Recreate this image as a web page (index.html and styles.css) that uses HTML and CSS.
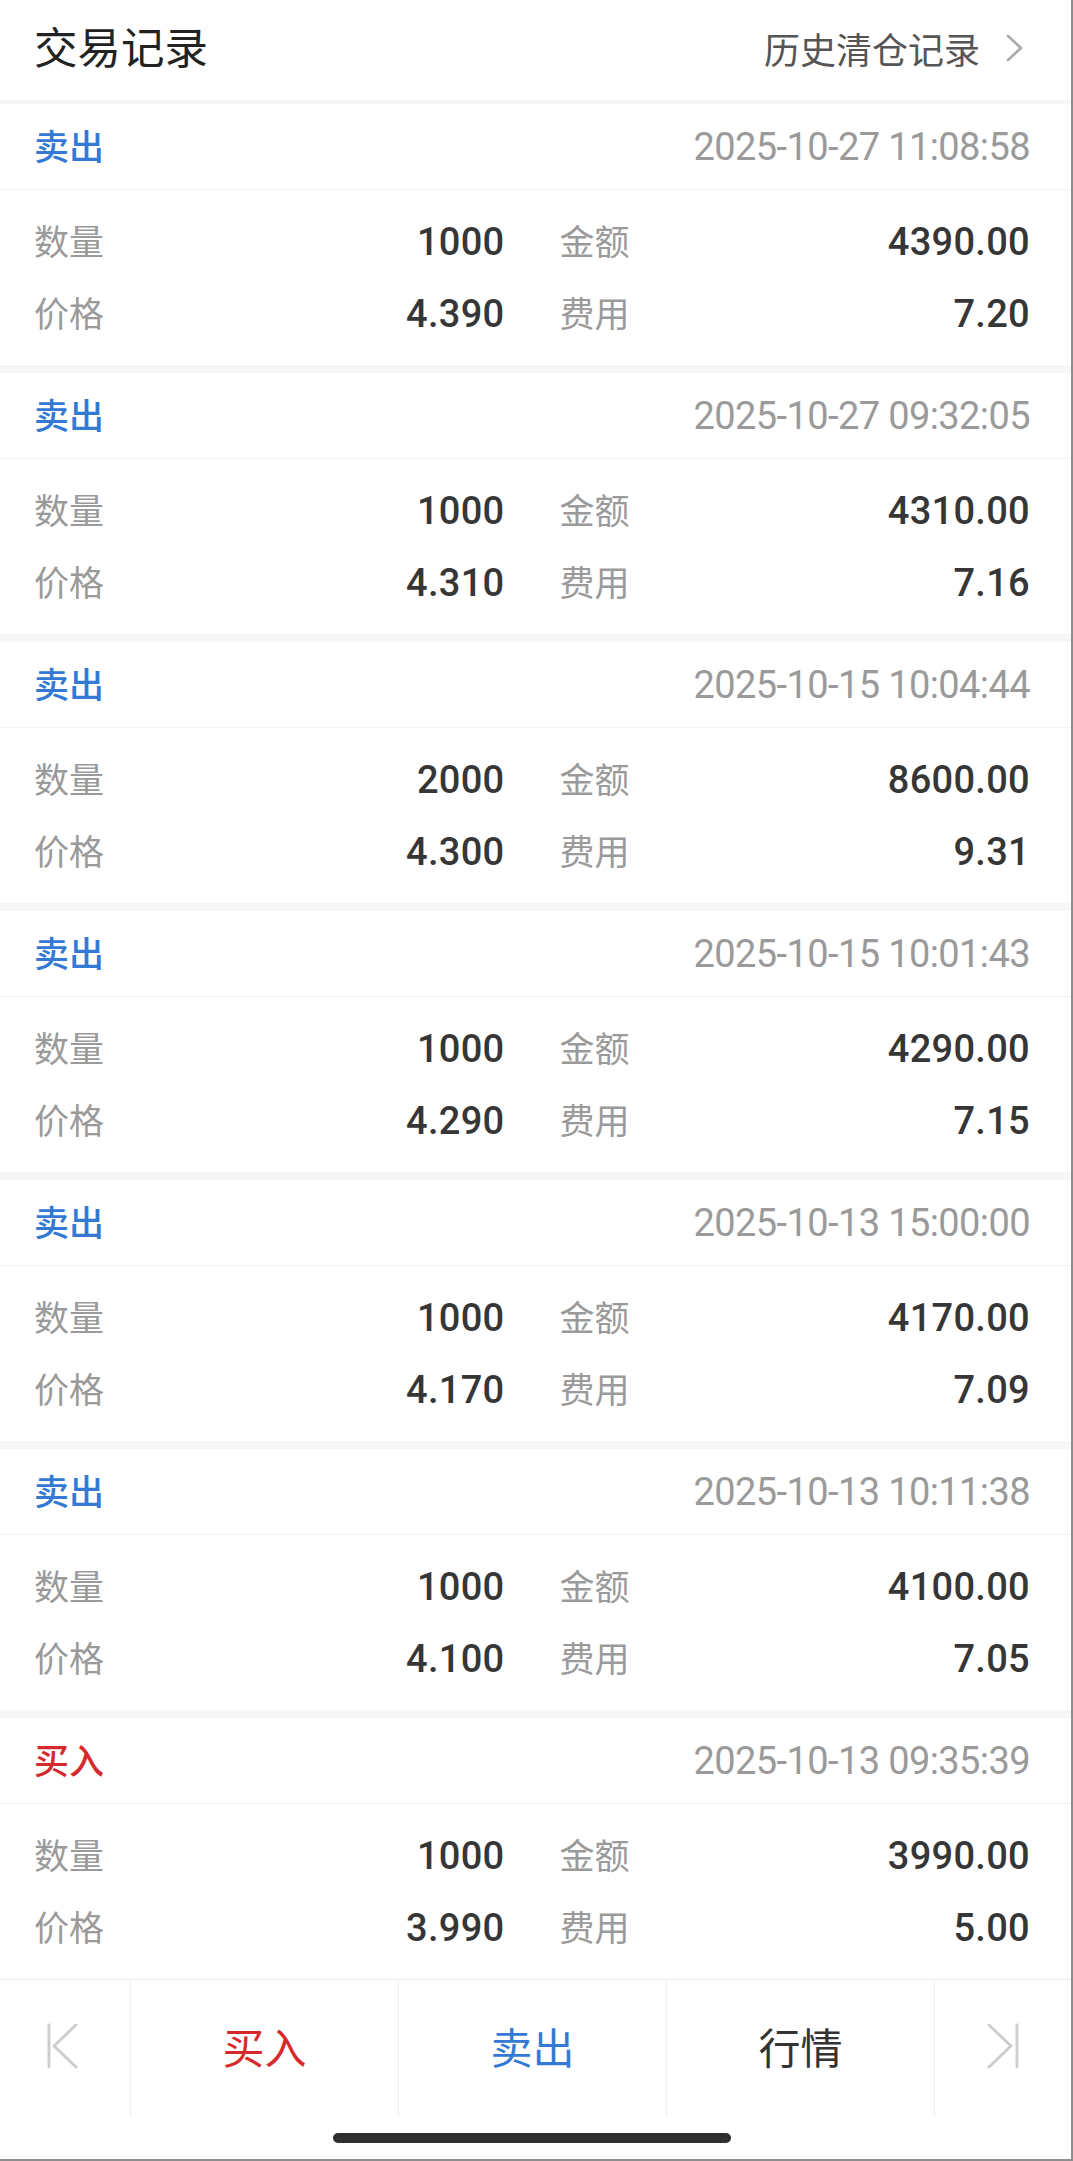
FILE: index.html
```html
<!DOCTYPE html>
<html lang="zh-CN">
<head>
<meta charset="utf-8">
<title>交易记录</title>
<link rel="stylesheet" href="styles.css">
</head>
<body>
<div class="screen">
  <header class="topbar">
    <h1 class="title">交易记录</h1>
    <a class="history">历史清仓记录<svg class="chev" width="18" height="28" viewBox="0 0 18 28"><polyline points="2,2 15,14 2,26" fill="none" stroke="#aaaaaa" stroke-width="2.6" stroke-linecap="round" stroke-linejoin="round"/></svg></a>
  </header>

  <main class="list">
    <section class="card">
      <div class="card-head"><span class="side sell">卖出</span><span class="time">2025-10-27 11:08:58</span></div>
      <div class="card-body">
        <div class="cell"><span class="label">数量</span><span class="value">1000</span></div>
        <div class="cell"><span class="label">金额</span><span class="value">4390.00</span></div>
        <div class="cell"><span class="label">价格</span><span class="value">4.390</span></div>
        <div class="cell"><span class="label">费用</span><span class="value">7.20</span></div>
      </div>
    </section>
    <section class="card">
      <div class="card-head"><span class="side sell">卖出</span><span class="time">2025-10-27 09:32:05</span></div>
      <div class="card-body">
        <div class="cell"><span class="label">数量</span><span class="value">1000</span></div>
        <div class="cell"><span class="label">金额</span><span class="value">4310.00</span></div>
        <div class="cell"><span class="label">价格</span><span class="value">4.310</span></div>
        <div class="cell"><span class="label">费用</span><span class="value">7.16</span></div>
      </div>
    </section>
    <section class="card">
      <div class="card-head"><span class="side sell">卖出</span><span class="time">2025-10-15 10:04:44</span></div>
      <div class="card-body">
        <div class="cell"><span class="label">数量</span><span class="value">2000</span></div>
        <div class="cell"><span class="label">金额</span><span class="value">8600.00</span></div>
        <div class="cell"><span class="label">价格</span><span class="value">4.300</span></div>
        <div class="cell"><span class="label">费用</span><span class="value">9.31</span></div>
      </div>
    </section>
    <section class="card">
      <div class="card-head"><span class="side sell">卖出</span><span class="time">2025-10-15 10:01:43</span></div>
      <div class="card-body">
        <div class="cell"><span class="label">数量</span><span class="value">1000</span></div>
        <div class="cell"><span class="label">金额</span><span class="value">4290.00</span></div>
        <div class="cell"><span class="label">价格</span><span class="value">4.290</span></div>
        <div class="cell"><span class="label">费用</span><span class="value">7.15</span></div>
      </div>
    </section>
    <section class="card">
      <div class="card-head"><span class="side sell">卖出</span><span class="time">2025-10-13 15:00:00</span></div>
      <div class="card-body">
        <div class="cell"><span class="label">数量</span><span class="value">1000</span></div>
        <div class="cell"><span class="label">金额</span><span class="value">4170.00</span></div>
        <div class="cell"><span class="label">价格</span><span class="value">4.170</span></div>
        <div class="cell"><span class="label">费用</span><span class="value">7.09</span></div>
      </div>
    </section>
    <section class="card">
      <div class="card-head"><span class="side sell">卖出</span><span class="time">2025-10-13 10:11:38</span></div>
      <div class="card-body">
        <div class="cell"><span class="label">数量</span><span class="value">1000</span></div>
        <div class="cell"><span class="label">金额</span><span class="value">4100.00</span></div>
        <div class="cell"><span class="label">价格</span><span class="value">4.100</span></div>
        <div class="cell"><span class="label">费用</span><span class="value">7.05</span></div>
      </div>
    </section>
    <section class="card">
      <div class="card-head"><span class="side buy">买入</span><span class="time">2025-10-13 09:35:39</span></div>
      <div class="card-body">
        <div class="cell"><span class="label">数量</span><span class="value">1000</span></div>
        <div class="cell"><span class="label">金额</span><span class="value">3990.00</span></div>
        <div class="cell"><span class="label">价格</span><span class="value">3.990</span></div>
        <div class="cell"><span class="label">费用</span><span class="value">5.00</span></div>
      </div>
    </section>
  </main>

  <nav class="toolbar">
    <div class="tool tool-icon first"><svg width="34" height="46" viewBox="0 0 34 46"><line x1="3" y1="2" x2="3" y2="44" stroke="#cccccc" stroke-width="2.8" stroke-linecap="round"/><polyline points="30,2 8,23 30,44" fill="none" stroke="#cccccc" stroke-width="2.8" stroke-linecap="round" stroke-linejoin="round"/></svg></div>
    <div class="tool buy">买入</div>
    <div class="tool sell">卖出</div>
    <div class="tool quote">行情</div>
    <div class="tool tool-icon"><svg width="34" height="46" viewBox="0 0 34 46"><polyline points="3,2 25,23 3,44" fill="none" stroke="#cccccc" stroke-width="2.8" stroke-linecap="round" stroke-linejoin="round"/><line x1="31" y1="2" x2="31" y2="44" stroke="#cccccc" stroke-width="2.8" stroke-linecap="round"/></svg></div>
  </nav>
  <div class="home-area"><div class="home-indicator"></div></div>
</div>
</body>
</html>
```

FILE: styles.css
```css
html, body {
  margin: 0;
  padding: 0;
  background: #ffffff;
}

body {
  font-family: "Noto Sans CJK SC", "Noto Sans", sans-serif;
}

.screen {
  width: 1073px;
  height: 2161px;
  box-sizing: border-box;
  border-right: 2px solid #8e8e8e;
  border-bottom: 2px solid #8e8e8e;
  background: #f5f6f8;
  display: flex;
  flex-direction: column;
  overflow: hidden;
}

/* Header */
.topbar {
  height: 100px;
  box-sizing: border-box;
  padding: 0 41px 8px 34px;
  margin-bottom: 4px;
  background: #ffffff;
  display: flex;
  align-items: center;
  justify-content: space-between;
  flex: none;
}

.title {
  margin: 0;
  font-size: 43.5px;
  font-weight: 400;
  line-height: 1;
  color: #222222;
}

.history {
  display: flex;
  align-items: center;
  gap: 26px;
  font-size: 36px;
  line-height: 1;
  color: #555555;
  padding-right: 6px;
  padding-top: 4px;
}

.chev {
  display: block;
}

/* List */
.list {
  display: flex;
  flex-direction: column;
  gap: 8px;
  flex: none;
}

.card {
  background: #ffffff;
}

.card-head {
  height: 85px;
  padding: 0 41px 0 34px;
  border-bottom: 1px solid #f3f3f4;
  display: flex;
  align-items: center;
  justify-content: space-between;
}

.side {
  font-size: 35px;
  font-weight: 500;
  line-height: 1;
  padding-bottom: 4px;
}

.sell {
  color: #3479d3;
}

.buy {
  color: #d6292c;
}

.time {
  font-family: Roboto, "Noto Sans", sans-serif;
  font-size: 38px;
  line-height: 1;
  letter-spacing: -0.6px;
  color: #9a9a9a;
}

.card-body {
  display: grid;
  grid-template-columns: 1fr 1fr;
  grid-auto-rows: 72px;
  column-gap: 55px;
  padding: 16px 41px 15px 34px;
}

.cell {
  display: flex;
  align-items: center;
  justify-content: space-between;
}

.label {
  font-size: 35px;
  line-height: 1;
  color: #9a9a9a;
  padding-bottom: 5px;
}

.value {
  font-family: Roboto, "Noto Sans", sans-serif;
  font-size: 38px;
  font-weight: 500;
  line-height: 1;
  letter-spacing: 0.3px;
  color: #363636;
}

/* Bottom toolbar */
.toolbar {
  flex: none;
  height: 138px;
  box-sizing: border-box;
  border-top: 1px solid #ececec;
  background: #ffffff;
  display: grid;
  grid-template-columns: 130px 268px 268px 268px 1fr;
}

.tool {
  display: flex;
  align-items: center;
  justify-content: center;
  padding-bottom: 5px;
  font-size: 42px;
  line-height: 1;
  border-left: 1px solid #eeeeee;
}

.tool.first {
  border-left: none;
}

.tool-icon svg {
  display: block;
}

.tool.first svg {
  margin-left: -4px;
}

.quote {
  color: #333333;
}

.home-area {
  flex: 1;
  background: #ffffff;
  padding: 16px 0 0 333px;
}

.home-indicator {
  width: 398px;
  height: 10px;
  border-radius: 5px;
  background: #2f2f2f;
}
```
